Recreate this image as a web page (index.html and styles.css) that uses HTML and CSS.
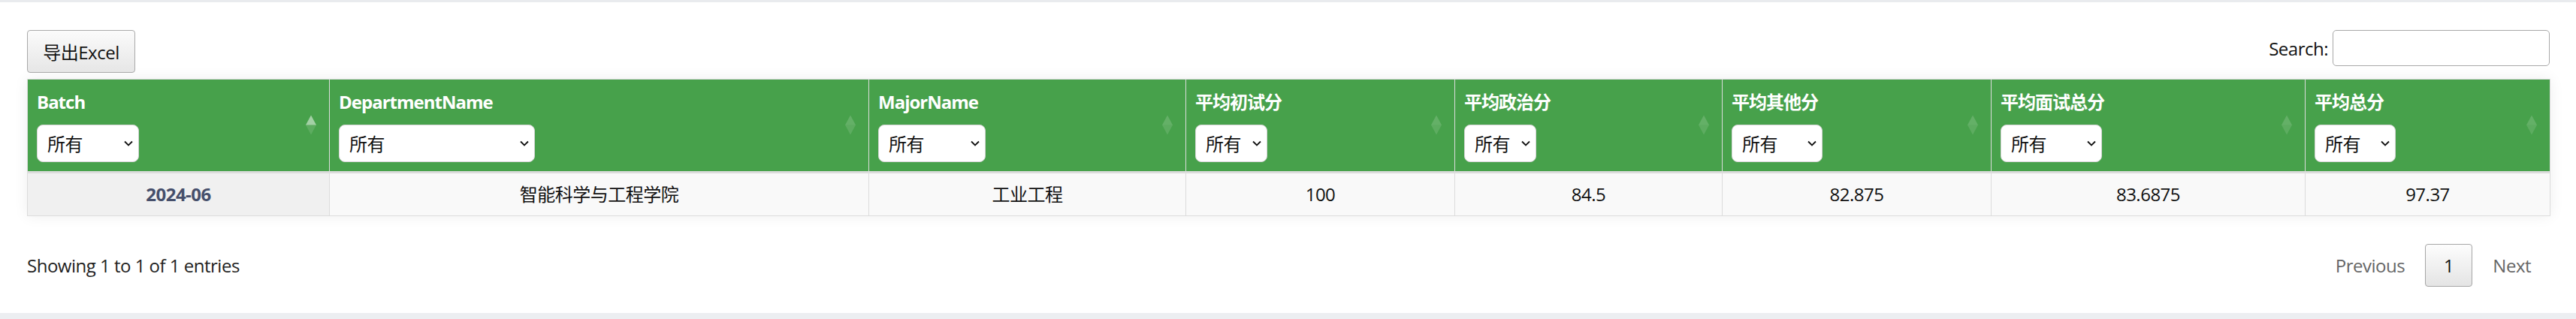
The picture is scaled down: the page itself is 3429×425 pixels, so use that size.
FILE: index.html
```html
<!DOCTYPE html>
<html lang="zh-CN">
<head>
<meta charset="utf-8">
<title>平均分统计</title>
<link rel="stylesheet" href="styles.css">
</head>
<body>
<div class="topbar"></div>
<div class="wrapper">
  <div class="toolbar">
    <button class="btn-export" type="button">导出Excel</button>
    <label class="search">Search:<input type="search" class="search-input"></label>
  </div>
  <table class="grid">
    <colgroup>
      <col class="c1"><col class="c2"><col class="c3"><col class="c4"><col class="c5"><col class="c6"><col class="c7"><col class="c8">
    </colgroup>
    <thead>
      <tr>
        <th class="asc"><div class="title">Batch</div><span class="sel"><select><option>所有</option><option>2024-06</option></select><svg class="chev" viewBox="0 0 12 8"><path d="M1 1.5 6 6.5 11 1.5" fill="none" stroke="#111" stroke-width="1.8"/></svg></span><span class="sort"><i class="up"></i><i class="down"></i></span></th>
        <th><div class="title">DepartmentName</div><span class="sel"><select><option>所有</option><option>智能科学与工程学院</option></select><svg class="chev" viewBox="0 0 12 8"><path d="M1 1.5 6 6.5 11 1.5" fill="none" stroke="#111" stroke-width="1.8"/></svg></span><span class="sort"><i class="up"></i><i class="down"></i></span></th>
        <th><div class="title">MajorName</div><span class="sel"><select><option>所有</option><option>工业工程</option></select><svg class="chev" viewBox="0 0 12 8"><path d="M1 1.5 6 6.5 11 1.5" fill="none" stroke="#111" stroke-width="1.8"/></svg></span><span class="sort"><i class="up"></i><i class="down"></i></span></th>
        <th><div class="title">平均初试分</div><span class="sel"><select><option>所有</option><option>100</option></select><svg class="chev" viewBox="0 0 12 8"><path d="M1 1.5 6 6.5 11 1.5" fill="none" stroke="#111" stroke-width="1.8"/></svg></span><span class="sort"><i class="up"></i><i class="down"></i></span></th>
        <th><div class="title">平均政治分</div><span class="sel"><select><option>所有</option><option>84.5</option></select><svg class="chev" viewBox="0 0 12 8"><path d="M1 1.5 6 6.5 11 1.5" fill="none" stroke="#111" stroke-width="1.8"/></svg></span><span class="sort"><i class="up"></i><i class="down"></i></span></th>
        <th><div class="title">平均其他分</div><span class="sel"><select><option>所有</option><option>82.875</option></select><svg class="chev" viewBox="0 0 12 8"><path d="M1 1.5 6 6.5 11 1.5" fill="none" stroke="#111" stroke-width="1.8"/></svg></span><span class="sort"><i class="up"></i><i class="down"></i></span></th>
        <th><div class="title">平均面试总分</div><span class="sel"><select><option>所有</option><option>83.6875</option></select><svg class="chev" viewBox="0 0 12 8"><path d="M1 1.5 6 6.5 11 1.5" fill="none" stroke="#111" stroke-width="1.8"/></svg></span><span class="sort"><i class="up"></i><i class="down"></i></span></th>
        <th><div class="title">平均总分</div><span class="sel"><select><option>所有</option><option>97.37</option></select><svg class="chev" viewBox="0 0 12 8"><path d="M1 1.5 6 6.5 11 1.5" fill="none" stroke="#111" stroke-width="1.8"/></svg></span><span class="sort"><i class="up"></i><i class="down"></i></span></th>
      </tr>
    </thead>
    <tbody>
      <tr>
        <td class="sorted">2024-06</td>
        <td>智能科学与工程学院</td>
        <td>工业工程</td>
        <td>100</td>
        <td>84.5</td>
        <td>82.875</td>
        <td>83.6875</td>
        <td>97.37</td>
      </tr>
    </tbody>
  </table>
  <div class="footer">
    <div class="info">Showing 1 to 1 of 1 entries</div>
    <div class="paginate">
      <span class="pg disabled">Previous</span>
      <span class="pg current">1</span>
      <span class="pg disabled">Next</span>
    </div>
  </div>
</div>
<div class="bottombar"></div>
</body>
</html>
```

FILE: styles.css
```css
html, body {
  margin: 0;
  padding: 0;
  background: #fff;
}
body {
  font-family: "Open Sans", "Noto Sans CJK SC", sans-serif;
  font-size: 24px;
  letter-spacing: -0.5px;
  color: #333;
  height: 425px;
  display: flex;
  flex-direction: column;
  overflow: hidden;
}
.topbar {
  height: 3px;
  background: #e9ebee;
}
.bottombar {
  height: 8px;
  background: #eceef1;
  margin-top: auto;
}
.wrapper {
  padding: 0 35px 0 36px;
}
.toolbar {
  display: flex;
  justify-content: space-between;
  align-items: flex-start;
  margin-top: 37px;
  height: 57px;
  margin-bottom: 8px;
}
.btn-export {
  font-family: inherit;
  font-size: 24px;
  letter-spacing: -0.5px;
  color: #111;
  height: 57px;
  width: 144px;
  padding: 0;
  border: 1px solid #a9a9a9;
  border-radius: 4px;
  background: linear-gradient(to bottom, #fbfbfb 0%, #e6e6e6 100%);
}
.search {
  display: flex;
  align-items: center;
  gap: 6px;
  color: #111;
}
.search-input {
  width: 289px;
  height: 48px;
  box-sizing: border-box;
  border: 1px solid #a8a8a8;
  border-radius: 5px;
  background: #fff;
  font-size: 24px;
}
.grid {
  width: 3358px;
  border-collapse: collapse;
  table-layout: fixed;
  box-shadow: 0 0 18px rgba(0, 0, 0, 0.07);
}
.c1 { width: 402px; }
.c2 { width: 718px; }
.c3 { width: 422px; }
.c4 { width: 358px; }
.c5 { width: 356px; }
.c6 { width: 358px; }
.c7 { width: 418px; }
.c8 { width: 326px; }
.grid th {
  position: relative;
  background: #47a14b;
  color: #fff;
  text-align: left;
  font-weight: 700;
  padding: 13px 12px 12px;
  border: 1px solid #dcdcdc;
  border-bottom: 3px solid #dcdcdc;
  vertical-align: top;
}
.title {
  line-height: 34px;
  height: 34px;
  margin-bottom: 13px;
  white-space: nowrap;
  letter-spacing: -1px;
}
.sel {
  position: relative;
  display: inline-block;
  vertical-align: top;
}
.sel select {
  appearance: none;
  -webkit-appearance: none;
  font-family: inherit;
  font-size: 24px;
  letter-spacing: -0.5px;
  color: #111;
  height: 50px;
  padding: 0 34px 0 13px;
  border: 1px solid #d4d4d4;
  border-radius: 8px;
  background: #fff;
  display: block;
}
.chev {
  position: absolute;
  right: 8px;
  top: 21px;
  width: 12px;
  height: 8px;
  pointer-events: none;
}
.sort {
  position: absolute;
  right: 16px;
  top: 50%;
  transform: translateY(-50%);
  width: 15px;
  height: 27px;
  display: flex;
  flex-direction: column;
}
.sort i {
  display: block;
  width: 0;
  height: 0;
  border-left: 7.5px solid transparent;
  border-right: 7.5px solid transparent;
}
.sort .up {
  border-bottom: 13px solid rgba(255, 255, 255, 0.16);
}
.sort .down {
  border-top: 13px solid rgba(255, 255, 255, 0.12);
}
.asc .sort .up {
  border-bottom-color: rgba(255, 255, 255, 0.5);
}
.grid td {
  background: #f9f9f9;
  color: #111;
  text-align: center;
  line-height: 34px;
  padding: 11px 12px;
  border: 1px solid #dcdcdc;
  border-top: 0;
}
.grid td.sorted {
  background: #f0f0f0;
  color: #464f6b;
  font-weight: 700;
}
.footer {
  display: flex;
  justify-content: space-between;
  align-items: center;
  margin-top: 37px;
}
.info {
  color: #222;
}
.paginate {
  display: flex;
  align-items: center;
}
.pg {
  display: inline-block;
  padding: 12px 24px;
  line-height: 31px;
  border: 1px solid transparent;
  border-radius: 4px;
  margin-left: 2px;
  color: #666;
}
.pg.current {
  color: #111;
  border-color: #a6a6a6;
  background: linear-gradient(to bottom, #fdfdfd 0%, #e4e4e4 100%);
}
```
